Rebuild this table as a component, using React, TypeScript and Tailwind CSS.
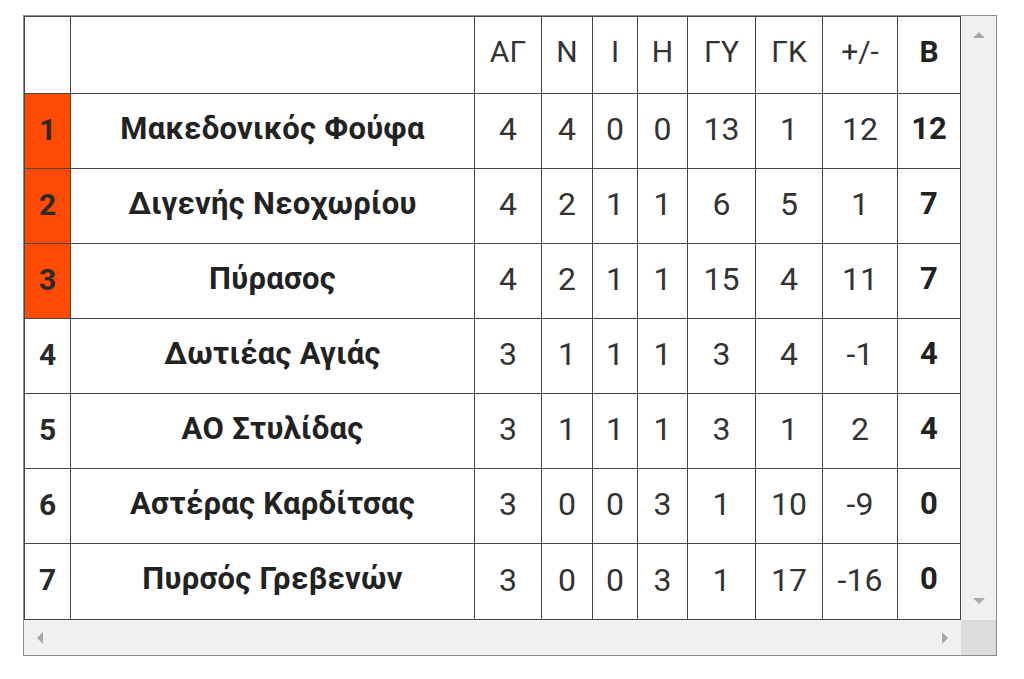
import React from "react";

const rows = [
  { r: "1", team: "Μακεδονικός Φούφα", v: ["4", "4", "0", "0", "13", "1", "12"], b: "12", hi: true },
  { r: "2", team: "Διγενής Νεοχωρίου", v: ["4", "2", "1", "1", "6", "5", "1"], b: "7", hi: true },
  { r: "3", team: "Πύρασος", v: ["4", "2", "1", "1", "15", "4", "11"], b: "7", hi: true },
  { r: "4", team: "Δωτιέας Αγιάς", v: ["3", "1", "1", "1", "3", "4", "-1"], b: "4", hi: false },
  { r: "5", team: "ΑΟ Στυλίδας", v: ["3", "1", "1", "1", "3", "1", "2"], b: "4", hi: false },
  { r: "6", team: "Αστέρας Καρδίτσας", v: ["3", "0", "0", "3", "1", "10", "-9"], b: "0", hi: false },
  { r: "7", team: "Πυρσός Γρεβενών", v: ["3", "0", "0", "3", "1", "17", "-16"], b: "0", hi: false },
];

const heads = ["ΑΓ", "Ν", "Ι", "Η", "ΓΥ", "ΓΚ", "+/-"];

export default function App() {
  return (
    <div
      className="w-[1024px] h-[679px] bg-white pt-[15px] pl-[23px]"
      style={{ fontFamily: "Roboto, 'Liberation Sans', sans-serif" }}
    >
      <div className="w-[974px] h-[641px] border border-[#8c8c8c] grid grid-cols-[937px_35px] grid-rows-[604px_35px]">
        <div className="grid grid-cols-[45px_403px_66px_50px_44px_49px_67px_66px_74px_62px] grid-rows-[76px_74px_74px_74px_74px_74px_74px_75px] gap-px p-px bg-[#464646] overflow-hidden">
          <div className="bg-white" />
          <div className="bg-white" />
          {heads.map((h) => (
            <div key={h} className="bg-white flex items-center justify-center text-[30px] text-[#333] pb-[7px]">
              {h}
            </div>
          ))}
          <div className="bg-white flex items-center justify-center text-[30px] font-bold text-[#222] pb-[7px]">
            Β
          </div>
          {rows.map((row) => (
            <React.Fragment key={row.r}>
              <div
                className={`${row.hi ? "bg-[#ff4a04]" : "bg-white"} flex items-center justify-center text-[30px] font-bold text-[#2a2a2a] pb-[4px]`}
              >
                {row.r}
              </div>
              <div className="bg-white flex items-center justify-center text-[31px] font-bold text-[#222] tracking-[0.3px] pb-[4px]">
                {row.team}
              </div>
              {row.v.map((x, i) => (
                <div key={i} className="bg-white flex items-center justify-center text-[32px] text-[#333] pb-[4px]">
                  {x}
                </div>
              ))}
              <div className="bg-white flex items-center justify-center text-[31px] font-bold text-[#222] pb-[4px]">
                {row.b}
              </div>
            </React.Fragment>
          ))}
        </div>
        <div className="bg-[#f0f0f0] flex flex-col items-center justify-between pt-[16px] pb-[16px]">
          <div className="w-0 h-0 border-l-[6px] border-r-[6px] border-b-[6px] border-l-transparent border-r-transparent border-b-[#a8a8a8]" />
          <div className="w-0 h-0 border-l-[6px] border-r-[6px] border-t-[6px] border-l-transparent border-r-transparent border-t-[#a8a8a8]" />
        </div>
        <div className="bg-[#f0f0f0] flex items-center justify-between pl-[13px] pr-[13px]">
          <div className="w-0 h-0 border-t-[6px] border-b-[6px] border-r-[6px] border-t-transparent border-b-transparent border-r-[#a8a8a8]" />
          <div className="w-0 h-0 border-t-[6px] border-b-[6px] border-l-[6px] border-t-transparent border-b-transparent border-l-[#a8a8a8]" />
        </div>
        <div className="bg-[#dcdcdc]" />
      </div>
    </div>
  );
}
